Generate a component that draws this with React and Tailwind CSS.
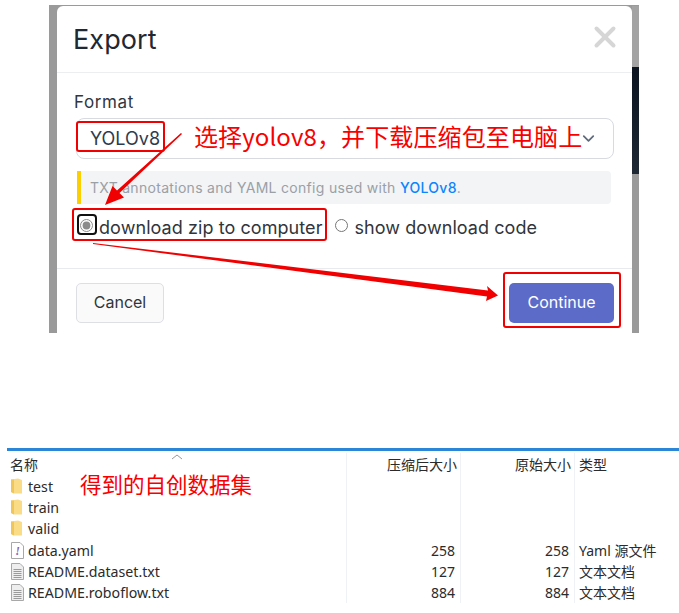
import { ChevronDown, X } from "lucide-react"

const inter = "font-['Inter','Liberation_Sans',sans-serif]"
const cjk = "font-['Noto_Sans','Noto_Sans_CJK_SC',sans-serif]"

const files = [
    { name: "test", kind: "folder" },
    { name: "train", kind: "folder" },
    { name: "valid", kind: "folder" },
    { name: "data.yaml", kind: "yaml", packed: "258", size: "258", type: "Yaml 源文件" },
    { name: "README.dataset.txt", kind: "text", packed: "127", size: "127", type: "文本文档" },
    { name: "README.roboflow.txt", kind: "text", packed: "884", size: "884", type: "文本文档" },
]

function FileIcon({ kind }) {
    if (kind === "folder") {
        return (
            <svg width="15" height="17" viewBox="0 0 15 17" className="shrink-0">
                <path d="M0 1.5 L7 .5 L11 2 L11 15.5 L3 15.5 L0 14 Z" fill="#fbdc86" />
                <path d="M0 1.5 L3 1.5 L3 15.5 L0 14 Z" fill="#efc65c" />
            </svg>
        )
    }
    return (
        <svg width="15" height="17" viewBox="0 0 15 17" className="shrink-0">
            <path d="M.5 .5 H9 L12.5 4 V16.5 H.5 Z" fill={kind === "yaml" ? "#fff" : "#eeeeee"} stroke="#a8a8a8" />
            {kind === "yaml" ? (
                <text x="6.5" y="13" textAnchor="middle" fontSize="12" fontStyle="italic" fontWeight="700" fill="#8a5fc0" fontFamily="Liberation Serif, serif">!</text>
            ) : (
                <path d="M2.5 6.5 H10.5 M2.5 8.5 H10.5 M2.5 10.5 H10.5 M2.5 12.5 H10.5 M2.5 14.5 H10.5" stroke="#9a9a9a" />
            )}
        </svg>
    )
}

function Modal() {
    return (
        <div className="ml-[49px] mt-[5px] flex h-[328px] w-[590px] bg-[#9a9a9a] pt-px">
            <div className="ml-2 flex h-full w-[575px] flex-col rounded-t-[6px] bg-white">
                <div className="flex h-[67px] shrink-0 items-center justify-between border-b border-[#eceef0] pl-[17px] pr-[18px]">
                    <h2 className="-ml-px pt-px text-[27px] leading-none tracking-[0.1px] text-[#1f2933]">Export</h2>
                    <X className="-mr-[8px] -mt-[5px] text-[#d6d6d6]" size={34} strokeWidth={2.8} />
                </div>
                <div className="flex h-[196px] shrink-0 flex-col border-b border-[#e8eaed] pl-[17px] pr-[18px]">
                    <label className="mt-[17px] text-[17px] leading-[24px] tracking-[0.6px] text-[#2f3740]">Format</label>
                    <div className="ml-[2px] mt-[4px] flex h-[41px] items-center justify-between rounded-[8px] border border-[#d8dae2] pl-[13px] pr-[15px]">
                        <span className="text-[18px] text-[#2f3b4c]">YOLOv8</span>
                        <ChevronDown className="text-[#5f6b7a]" size={19} strokeWidth={2.2} />
                    </div>
                    <div className="ml-[3px] mr-[3px] mt-[12px] flex h-[33px] items-center rounded-r-[4px] border-l-4 border-[#fccf00] bg-[#f3f4f6] pl-[9px] text-[14px] tracking-[0.3px] text-[#9aa0a6]">
                        <span>TXT annotations and YAML config used with <span className="font-medium text-[#0a84ff]">YOLOv8</span>.</span>
                    </div>
                    <div className="mt-[11px] flex h-[24px] items-center text-[18px] tracking-[0.07px] text-[#30353b]">
                        <input type="radio" defaultChecked name="dl" className="-mt-[4px] ml-[6px] h-[13px] w-[13px] accent-[#8c8c8c]" />
                        <span className="ml-[6px]">download zip to computer</span>
                        <input type="radio" name="dl" className="-mt-[4px] ml-[12px] h-[13px] w-[13px]" />
                        <span className="ml-[7px]">show download code</span>
                    </div>
                </div>
                <div className="flex items-start justify-between pl-[19px] pr-[18px] pt-[14px]">
                    <button className="h-[40px] w-[88px] rounded-[5px] border border-[#dcdfe4] bg-[#fafafa] pb-[2px] text-[16px] text-[#30353b]">Cancel</button>
                    <button className="h-[40px] w-[105px] rounded-[5px] bg-[#5c6bc8] pb-[2px] text-[16px] text-white">Continue</button>
                </div>
            </div>
            <div className="flex w-[7px] flex-col">
                <div className="h-[61px] bg-[#a3a3a3]" />
                <div className="h-[107px] bg-gradient-to-b from-[#0b1420] to-[#1e2835]" />
            </div>
        </div>
    )
}

function FileTable() {
    return (
        <div className={`ml-[7px] mt-[115px] border-t-[3px] border-[#2b86d8] text-[14px] text-[#2b2b2b] ${cjk}`}>
            <div className="grid grid-cols-[340px_114px_114px_1fr] pt-[2px]">
                <div className="relative flex h-[23px] items-center border-r border-[#eef2f7] pl-[3px]">
                    名称
                    <svg width="12" height="6" viewBox="0 0 12 6" className="absolute left-[164px] top-[1px]">
                        <path d="M1 5 L6 1 L11 5" fill="none" stroke="#9a9a9a" />
                    </svg>
                </div>
                <div className="flex h-[23px] items-center justify-end border-r border-[#eef2f7] pr-[3px]">压缩后大小</div>
                <div className="flex h-[23px] items-center justify-end border-r border-[#eef2f7] pr-[3px]">原始大小</div>
                <div className="flex h-[23px] items-center pl-[4px]">类型</div>
                {files.map((file) => (
                    <div key={file.name} className="contents">
                        <div className="flex h-[21.2px] items-center gap-[2px] border-r border-[#eef2f7] pl-[4px] text-[14.2px]">
                            <FileIcon kind={file.kind} />
                            {file.name}
                        </div>
                        <div className="flex h-[21.2px] items-center justify-end border-r border-[#eef2f7] pr-[5px]">{file.packed}</div>
                        <div className="flex h-[21.2px] items-center justify-end border-r border-[#eef2f7] pr-[5px]">{file.size}</div>
                        <div className="flex h-[21.2px] items-center pl-[4px]">{file.type}</div>
                    </div>
                ))}
            </div>
        </div>
    )
}

// red markup drawn on top of the screenshot
function Annotations() {
    return (
        <>
            <div className="absolute left-[76px] top-[121px] h-[31px] w-[89px] rounded-[3px] border-2 border-[#f00000]" />
            <div className="absolute left-[72px] top-[208px] h-[33px] w-[255px] rounded-[3px] border-2 border-[#f00000]" />
            <div className="absolute left-[503px] top-[272px] h-[56px] w-[118px] rounded-[3px] border-2 border-[#f00000]" />
            <div className="absolute left-[77px] top-[214px] h-[21px] w-[20px] rounded-[4px] border-2 border-[#111]" />
            <div className="absolute left-[194px] top-[119px] whitespace-nowrap font-['Noto_Sans_CJK_SC',sans-serif] text-[24px] leading-[34px] tracking-[0.12px] text-[#f80000]">选择yolov8，并下载压缩包至电脑上</div>
            <div className="absolute left-[80px] top-[468px] whitespace-nowrap font-['Noto_Sans_CJK_SC',sans-serif] text-[21.5px] leading-[32px] text-[#f80000]">得到的自创数据集</div>
            <svg width="679" height="340" viewBox="0 0 679 340" className="pointer-events-none absolute left-0 top-0">
                <path d="M182 134 L119.5 193 L124 197.5 L105 205 L112.5 186 L117 190.5 L181 133 Z" fill="#f00000" />
                <path d="M93 243 L93 244 L487 296.5 L486 301 L498 295.5 L487 286 L488 290.5 Z" fill="#f00000" />
            </svg>
        </>
    )
}

export default function App() {
    return (
        <div className={`relative h-[613px] w-[679px] overflow-hidden bg-white ${inter}`}>
            <Modal />
            <FileTable />
            <Annotations />
        </div>
    )
}
